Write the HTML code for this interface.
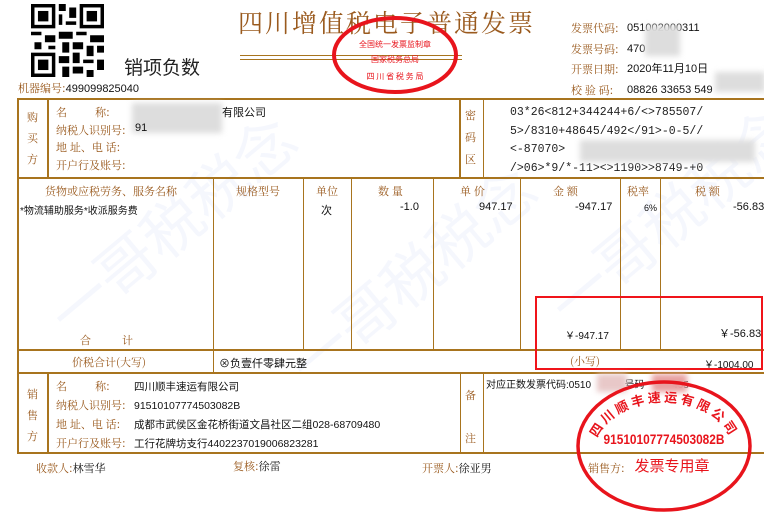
<!DOCTYPE html><html><head><meta charset="utf-8"><style>
body{margin:0;width:764px;height:486px;overflow:hidden;background:#fff;position:relative;font-family:"Liberation Sans","Noto Sans CJK SC",sans-serif}
.a{position:absolute;white-space:nowrap}
.b{color:#9a5a1e;font-family:"Noto Serif CJK SC","Liberation Serif",serif}
.k{color:#111;font-size:11px}
.h{position:absolute;height:2px;background:#a8741e}
.v{position:absolute;width:2px;background:#a8741e}
.v1{position:absolute;width:1px;background:#a8741e}
.bl{position:absolute;background:#ddd;filter:blur(3px)}
.wm{position:absolute;color:rgba(120,140,220,.07);font-size:60px;transform:rotate(-40deg);font-family:"Noto Sans CJK SC",sans-serif;white-space:nowrap}
</style></head><body>
<div class="wm" style="left:20px;top:180px">一哥税税念</div>
<div class="wm" style="left:260px;top:230px">一哥税税念</div>
<div class="wm" style="left:520px;top:170px">一哥税税念</div>
<svg class="a" style="left:31px;top:4px" width="73" height="73" viewBox="0 0 21 21"><rect width="21" height="21" fill="#fff"/><g fill="#000"><rect x="0" y="0" width="7" height="7"/><rect x="14" y="0" width="7" height="7"/><rect x="0" y="14" width="7" height="7"/></g><g fill="#fff"><rect x="1" y="1" width="5" height="5"/><rect x="15" y="1" width="5" height="5"/><rect x="1" y="15" width="5" height="5"/></g><g fill="#000"><rect x="2" y="2" width="3" height="3"/><rect x="16" y="2" width="3" height="3"/><rect x="2" y="16" width="3" height="3"/><path d="M8 0h2v2h-2zM11 1h2v3h-2zM8 3h1v3h-1zM10 5h3v1h-3zM0 8h3v1h-3zM4 9h3v2h-3zM8 8h4v2h-4zM13 8h3v1h-3zM17 9h4v2h-4zM1 11h2v2h-2zM9 11h2v3h-2zM12 11h3v2h-3zM16 12h2v3h-2zM19 12h2v2h-2zM8 15h3v2h-3zM12 14h2v3h-2zM15 16h3v1h-3zM19 16h2v3h-2zM9 18h2v3h-2zM12 18h3v2h-3zM16 19h2v2h-2zM5 12h2v1h-2z"/></g></svg>
<div class="a" style="left:124px;top:53px;font-size:19px;color:#222">销项负数</div>
<div class="a b" style="left:18px;top:80px;font-size:11px">机器编号:<span style="color:#111;font-family:'Liberation Sans'">499099825040</span></div>
<div class="a b" style="left:238px;top:4px;font-size:25px;letter-spacing:2px">四川增值税电子普通发票</div>
<div class="h" style="left:240px;top:55px;width:222px;height:1px"></div>
<div class="h" style="left:240px;top:59px;width:222px;height:1px"></div>
<svg class="a" style="left:330px;top:15px" width="130" height="80"><ellipse cx="65" cy="40" rx="61" ry="37" fill="none" stroke="#e8141c" stroke-width="4"/><text x="65" y="32" font-size="8" fill="#e8141c" text-anchor="middle" font-family="Noto Sans CJK SC">全国统一发票监制章</text><text x="65" y="47" font-size="8" fill="#e8141c" text-anchor="middle" font-family="Noto Sans CJK SC">国家税务总局</text><text x="65" y="64" font-size="8" fill="#e8141c" text-anchor="middle" font-family="Noto Sans CJK SC">四 川 省 税 务 局</text></svg>
<div class="a b" style="left:571px;top:18px;font-size:11px;line-height:20.5px">发票代码:<br>发票号码:<br>开票日期:<br>校 验 码:</div>
<div class="a k" style="left:627px;top:18px;line-height:20.5px">051002000311<br>470<br>2020年11月10日<br>08826 33653 549</div>
<div class="bl" style="left:645px;top:26px;width:35px;height:30px"></div>
<div class="bl" style="left:715px;top:72px;width:50px;height:20px"></div>
<div class="h" style="left:18px;top:98px;width:746px"></div>
<div class="h" style="left:18px;top:177px;width:746px"></div>
<div class="h" style="left:18px;top:349px;width:746px"></div>
<div class="h" style="left:18px;top:372px;width:746px"></div>
<div class="h" style="left:18px;top:452px;width:746px"></div>
<div class="v" style="left:17px;top:98px;height:356px"></div>
<div class="v" style="left:47px;top:98px;height:80px"></div>
<div class="v" style="left:459px;top:98px;height:80px"></div>
<div class="v1" style="left:483px;top:98px;height:80px"></div>
<div class="v" style="left:47px;top:372px;height:81px"></div>
<div class="v1" style="left:460px;top:372px;height:81px"></div>
<div class="v1" style="left:483px;top:372px;height:81px"></div>
<div class="v1" style="left:213px;top:178px;height:195px"></div>
<div class="v1" style="left:303px;top:178px;height:172px"></div>
<div class="v1" style="left:351px;top:178px;height:172px"></div>
<div class="v1" style="left:433px;top:178px;height:172px"></div>
<div class="v1" style="left:520px;top:178px;height:172px"></div>
<div class="v1" style="left:620px;top:178px;height:172px"></div>
<div class="v1" style="left:660px;top:178px;height:172px"></div>
<div class="a b" style="left:27px;top:107px;font-size:11px;line-height:21px">购<br>买<br>方</div>
<div class="a b" style="left:56px;top:104px;font-size:11px;line-height:17.5px">名&nbsp;&nbsp;&nbsp;&nbsp;&nbsp;&nbsp;&nbsp;&nbsp;&nbsp;&nbsp;称:<br>纳税人识别号:<br>地 址、电 话:<br>开户行及账号:</div>
<div class="bl" style="left:132px;top:103px;width:90px;height:30px"></div>
<div class="a k" style="left:222px;top:104px">有限公司</div>
<div class="a k" style="left:135px;top:122px">91</div>
<div class="a b" style="left:465px;top:104px;font-size:11px;line-height:22px">密<br>码<br>区</div>
<div class="a" style="left:510px;top:104px;font-family:'Liberation Mono',monospace;font-size:11.5px;line-height:18.5px;color:#222">03*26&lt;812+344244+6/&lt;&gt;785507/<br>5&gt;/8310+48645/492&lt;/91&gt;-0-5//<br>&lt;-87070&gt;<br>/&gt;06&gt;*9/*-11&gt;&lt;&gt;1190&gt;&gt;8749-+0</div>
<div class="bl" style="left:580px;top:140px;width:175px;height:22px"></div>
<div class="a b" style="left:45px;top:183px;font-size:11px">货物或应税劳务、服务名称</div>
<div class="a b" style="left:236px;top:183px;font-size:11px">规格型号</div>
<div class="a b" style="left:316px;top:183px;font-size:11px">单位</div>
<div class="a b" style="left:378px;top:183px;font-size:11px">数 量</div>
<div class="a b" style="left:460px;top:183px;font-size:11px">单 价</div>
<div class="a b" style="left:553px;top:183px;font-size:11px">金 额</div>
<div class="a b" style="left:627px;top:183px;font-size:11px">税率</div>
<div class="a b" style="left:695px;top:183px;font-size:11px">税 额</div>
<div class="a k" style="left:20px;top:202px;font-size:10px">*物流辅助服务*收派服务费</div>
<div class="a k" style="left:321px;top:202px">次</div>
<div class="a k" style="left:400px;top:201px">-1.0</div>
<div class="a k" style="left:479px;top:201px">947.17</div>
<div class="a k" style="left:575px;top:201px">-947.17</div>
<div class="a k" style="left:644px;top:203px;font-size:9px">6%</div>
<div class="a k" style="left:733px;top:201px">-56.83</div>
<div class="a b" style="left:80px;top:332px;font-size:11px">合&nbsp;&nbsp;&nbsp;&nbsp;&nbsp;&nbsp;&nbsp;&nbsp;&nbsp;&nbsp;&nbsp;计</div>
<div class="a k" style="left:565px;top:327px;font-size:10px">￥-947.17</div>
<div class="a k" style="left:719px;top:325px;font-size:11px">￥-56.83</div>
<div class="a b" style="left:72px;top:354px;font-size:11px">价税合计(大写)</div>
<div class="a k" style="left:219px;top:355px">⊗负壹仟零肆元整</div>
<div class="a b" style="left:570px;top:353px;font-size:11px">(小写)</div>
<div class="a k" style="left:704px;top:356px;font-size:10px">￥-1004.00</div>
<div class="a" style="left:535px;top:296px;width:224px;height:70px;border:2.5px solid #f0141a"></div>
<div class="a b" style="left:27px;top:384px;font-size:11px;line-height:21px">销<br>售<br>方</div>
<div class="a b" style="left:56px;top:377px;font-size:11px;line-height:19px">名&nbsp;&nbsp;&nbsp;&nbsp;&nbsp;&nbsp;&nbsp;&nbsp;&nbsp;&nbsp;称:<br>纳税人识别号:<br>地 址、电 话:<br>开户行及账号:</div>
<div class="a k" style="left:134px;top:378px;line-height:19px;font-size:10.5px">四川顺丰速运有限公司<br>91510107774503082B<br>成都市武侯区金花桥街道文昌社区二组028-68709480<br>工行花牌坊支行4402237019006823281</div>
<div class="a b" style="left:465px;top:387px;font-size:11px">备</div>
<div class="a b" style="left:465px;top:430px;font-size:11px">注</div>
<div class="a k" style="left:486px;top:376px;font-size:10px">对应正数发票代码:0510&nbsp;&nbsp;&nbsp;&nbsp;&nbsp;&nbsp;&nbsp;&nbsp;&nbsp;&nbsp;&nbsp;&nbsp;号码&nbsp;&nbsp;&nbsp;&nbsp;&nbsp;&nbsp;&nbsp;&nbsp;&nbsp;&nbsp;405</div>
<div class="bl" style="left:597px;top:374px;width:30px;height:18px;background:#e8c8c8"></div>
<div class="bl" style="left:652px;top:374px;width:35px;height:18px;background:#e8a0a0"></div>
<svg class="a" style="left:572px;top:376px" width="192" height="140"><defs><path id="arc" d="M22 78 A70 52 0 0 1 162 78"/></defs><ellipse cx="92" cy="70" rx="86" ry="64" fill="none" stroke="#e8141c" stroke-width="3.5"/><text font-size="13" font-weight="bold" fill="#e8141c" font-family="Noto Sans CJK SC" letter-spacing="3"><textPath href="#arc" startOffset="50%" text-anchor="middle">四川顺丰速运有限公司</textPath></text><text x="92" y="68" font-size="14" font-weight="bold" fill="#e8141c" text-anchor="middle" font-family="Liberation Sans" transform="translate(92 0) scale(0.85 1) translate(-92 0)">91510107774503082B</text><text x="100" y="95" font-size="15" fill="#e8141c" text-anchor="middle" font-family="Noto Sans CJK SC">发票专用章</text></svg>
<div class="a b" style="left:36px;top:460px;font-size:11px">收款人:<span class="k">林雪华</span></div>
<div class="a b" style="left:233px;top:458px;font-size:11px">复核:<span class="k">徐雷</span></div>
<div class="a b" style="left:422px;top:460px;font-size:11px">开票人:<span class="k">徐亚男</span></div>
<div class="a b" style="left:588px;top:460px;font-size:11px">销售方:</div>
</body></html>
